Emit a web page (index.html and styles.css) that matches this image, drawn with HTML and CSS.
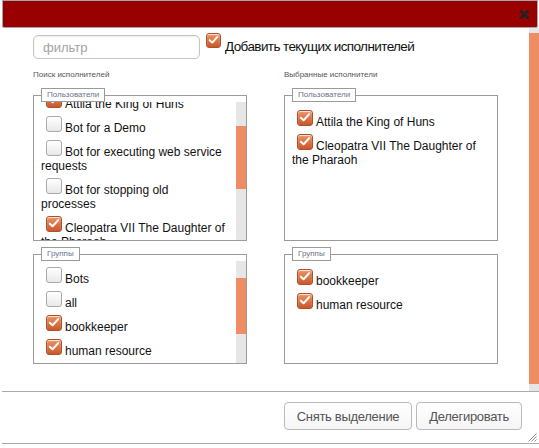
FILE: index.html
```html
<!DOCTYPE html>
<html lang="ru">
<head>
<meta charset="utf-8">
<title>Делегирование</title>
<link rel="stylesheet" href="styles.css">
</head>
<body>
<div class="dialog">
  <div class="titlebar">
    <button class="close" type="button" aria-label="Закрыть">
      <svg viewBox="0 0 9 9" width="9" height="9"><path d="M1.3 1.3L7.7 7.7M7.7 1.3L1.3 7.7" stroke="#222" stroke-width="2.8" stroke-linecap="round"/></svg>
    </button>
  </div>
  <div class="body">
    <div class="content">
      <div class="toprow">
        <input class="filter" type="text" placeholder="фильтр">
        <label class="addcur"><span class="cb on small"><svg viewBox="0 0 16 16"><path d="M3.2 7.6L6.4 10.6L12.8 3.6" /></svg></span><span class="addcur-text">Добавить текущих исполнителей</span></label>
      </div>
      <div class="columns">
        <div class="col">
          <div class="caption">Поиск исполнителей</div>
          <fieldset class="box users">
            <legend>Пользователи</legend>
            <div class="pane">
              <div class="items">
                <div class="items-inner scroll-users">
                  <label class="item"><span class="cb on"><svg viewBox="0 0 16 16"><path d="M3.2 7.6L6.4 10.6L12.8 3.6" /></svg></span>Attila the King of Huns</label>
                  <label class="item"><span class="cb"></span>Bot for a Demo</label>
                  <label class="item"><span class="cb"></span>Bot for executing web service requests</label>
                  <label class="item"><span class="cb"></span>Bot for stopping old processes</label>
                  <label class="item"><span class="cb on"><svg viewBox="0 0 16 16"><path d="M3.2 7.6L6.4 10.6L12.8 3.6" /></svg></span>Cleopatra VII The Daughter of the Pharaoh</label>
                </div>
              </div>
              <div class="vbar"><div class="thumb t-users"></div></div>
            </div>
          </fieldset>
          <fieldset class="box groups">
            <legend>Группы</legend>
            <div class="pane">
              <div class="items">
                <div class="items-inner scroll-groups">
                  <label class="item"><span class="cb"></span>Bots</label>
                  <label class="item"><span class="cb"></span>all</label>
                  <label class="item"><span class="cb on"><svg viewBox="0 0 16 16"><path d="M3.2 7.6L6.4 10.6L12.8 3.6" /></svg></span>bookkeeper</label>
                  <label class="item"><span class="cb on"><svg viewBox="0 0 16 16"><path d="M3.2 7.6L6.4 10.6L12.8 3.6" /></svg></span>human resource</label>
                  <label class="item"><span class="cb"></span>managers</label>
                </div>
              </div>
              <div class="vbar"><div class="thumb t-groups"></div></div>
            </div>
          </fieldset>
        </div>
        <div class="col">
          <div class="caption">Выбранные исполнители</div>
          <fieldset class="box users">
            <legend>Пользователи</legend>
            <div class="pane">
              <div class="items">
                <div class="items-inner">
                  <label class="item"><span class="cb on"><svg viewBox="0 0 16 16"><path d="M3.2 7.6L6.4 10.6L12.8 3.6" /></svg></span>Attila the King of Huns</label>
                  <label class="item"><span class="cb on"><svg viewBox="0 0 16 16"><path d="M3.2 7.6L6.4 10.6L12.8 3.6" /></svg></span>Cleopatra VII The Daughter of the Pharaoh</label>
                </div>
              </div>
            </div>
          </fieldset>
          <fieldset class="box groups">
            <legend>Группы</legend>
            <div class="pane">
              <div class="items">
                <div class="items-inner">
                  <label class="item"><span class="cb on"><svg viewBox="0 0 16 16"><path d="M3.2 7.6L6.4 10.6L12.8 3.6" /></svg></span>bookkeeper</label>
                  <label class="item"><span class="cb on"><svg viewBox="0 0 16 16"><path d="M3.2 7.6L6.4 10.6L12.8 3.6" /></svg></span>human resource</label>
                </div>
              </div>
            </div>
          </fieldset>
        </div>
      </div>
    </div>
    <div class="vbar main"><div class="thumb t-main"></div></div>
  </div>
  <div class="footer">
    <button class="btn" type="button">Снять выделение</button>
    <button class="btn" type="button">Делегировать</button>
    <svg class="grip" viewBox="0 0 10 10" width="10" height="10"><path d="M9.5 1.5L1.5 9.5M9.5 4.5L4.5 9.5M9.5 7.5L7.5 9.5" stroke="#8a8a8a" stroke-width="1"/></svg>
  </div>
</div>
</body>
</html>
```

FILE: styles.css
```css
* { box-sizing: border-box; }
html, body { margin: 0; padding: 0; background: #fff; }
body {
  width: 539px;
  height: 448px;
  overflow: hidden;
  font-family: "Liberation Sans", Arial, sans-serif;
  color: #111;
}

.titlebar {
  height: 28px;
  margin: 0 1px 0 2px;
  background: #990000;
  border: 1px solid #a5a5a5;
  border-radius: 0 0 2px 2px;
  display: flex;
  justify-content: flex-end;
  align-items: center;
  padding-right: 8px;
}
.close {
  border: 0;
  background: none;
  padding: 0;
  width: 9px;
  height: 9px;
  display: block;
}
.close svg { display: block; }

.body {
  display: flex;
  height: 363px;
}
.content {
  flex: 1;
  min-width: 0;
  padding: 5px 0 0 33px;
  overflow: hidden;
}

.vbar {
  flex: none;
  width: 10px;
  background: #e6e6e6;
}
.thumb { background: #ef8c64; }
.t-main { margin-top: 5px; height: 351px; }
.t-users { margin-top: 24px; height: 63px; }
.t-groups { margin-top: 17px; height: 56px; }

.toprow {
  display: flex;
  align-items: flex-start;
  height: 26px;
}
.filter {
  width: 167px;
  height: 24px;
  margin: 2px 0 0;
  border: 1px solid #c4c4c4;
  border-radius: 5px;
  padding: 0 9px;
  font: 13px "Liberation Sans", Arial, sans-serif;
  color: #333;
  box-shadow: inset 0 1px 2px rgba(0, 0, 0, 0.07);
  outline: none;
}
.filter::placeholder { color: #a3a3a3; }
.addcur {
  display: flex;
  align-items: flex-start;
  margin-left: 6px;
  font-size: 13.5px;
  letter-spacing: -0.6px;
  color: #111;
}
.addcur-text {
  margin-left: 4px;
  margin-top: 6px;
  line-height: 15px;
}

.columns {
  display: grid;
  grid-template-columns: 214px 214px;
  column-gap: 37px;
  margin-top: 11px;
}
.caption {
  font-size: 8px;
  line-height: 10px;
  height: 10px;
  color: #555;
}

.box {
  margin: 8px 0 0;
  padding: 0;
  border: 1px solid #9a9a9a;
  min-width: 0;
}
.box.groups { margin-top: 6px; }
.box legend {
  margin-left: 7px;
  padding: 0 5px;
  border: 1px solid #9a9a9a;
  height: 14px;
  font-size: 8px;
  line-height: 12px;
  color: #6a7488;
  background: #fff;
}

.pane {
  display: flex;
  height: 138px;
  overflow: hidden;
}
.groups .pane { height: 102px; }
.items {
  flex: 1;
  min-width: 0;
  overflow: hidden;
  padding: 8px 10.25px 0 7px;
}
.scroll-users { margin-top: -18px; }
.scroll-groups { margin-top: -2px; }

.item {
  display: block;
  font-size: 12px;
  line-height: 14px;
  margin-bottom: 5px;
  color: #111;
}

.cb {
  display: inline-block;
  width: 16px;
  height: 16px;
  margin: 0 3px 0 5px;
  vertical-align: baseline;
  border: 1px solid #a9a9a9;
  border-radius: 3px;
  background: linear-gradient(#ffffff, #e8e8e8);
  box-shadow: inset 0 1px 1px rgba(255, 255, 255, 0.8);
}
.cb.on {
  border-color: #b0502a;
  background: linear-gradient(#ee9366, #c8582c);
}
.cb svg {
  display: block;
  width: 14px;
  height: 14px;
}
.cb svg path {
  fill: none;
  stroke: #fff;
  stroke-width: 2.3;
  stroke-linecap: round;
  stroke-linejoin: round;
}
.cb.small {
  width: 15px;
  height: 15px;
  margin: 0;
}
.cb.small svg { width: 13px; height: 13px; }

.footer {
  position: relative;
  margin-left: 2px;
  height: 53px;
  border-top: 1px solid #ababab;
  border-bottom: 1px solid #ababab;
  display: flex;
  justify-content: flex-end;
  align-items: flex-start;
  gap: 4px;
  padding: 10px 17px 0 0;
}
.btn {
  height: 28px;
  padding: 0 12px;
  border: 1px solid #b9b9b9;
  border-radius: 4px;
  background: linear-gradient(#ffffff, #f5f5f5);
  font: 13px "Liberation Sans", Arial, sans-serif;
  letter-spacing: -0.3px;
  color: #555;
}
.grip {
  position: absolute;
  right: 2px;
  bottom: 1px;
}
```
